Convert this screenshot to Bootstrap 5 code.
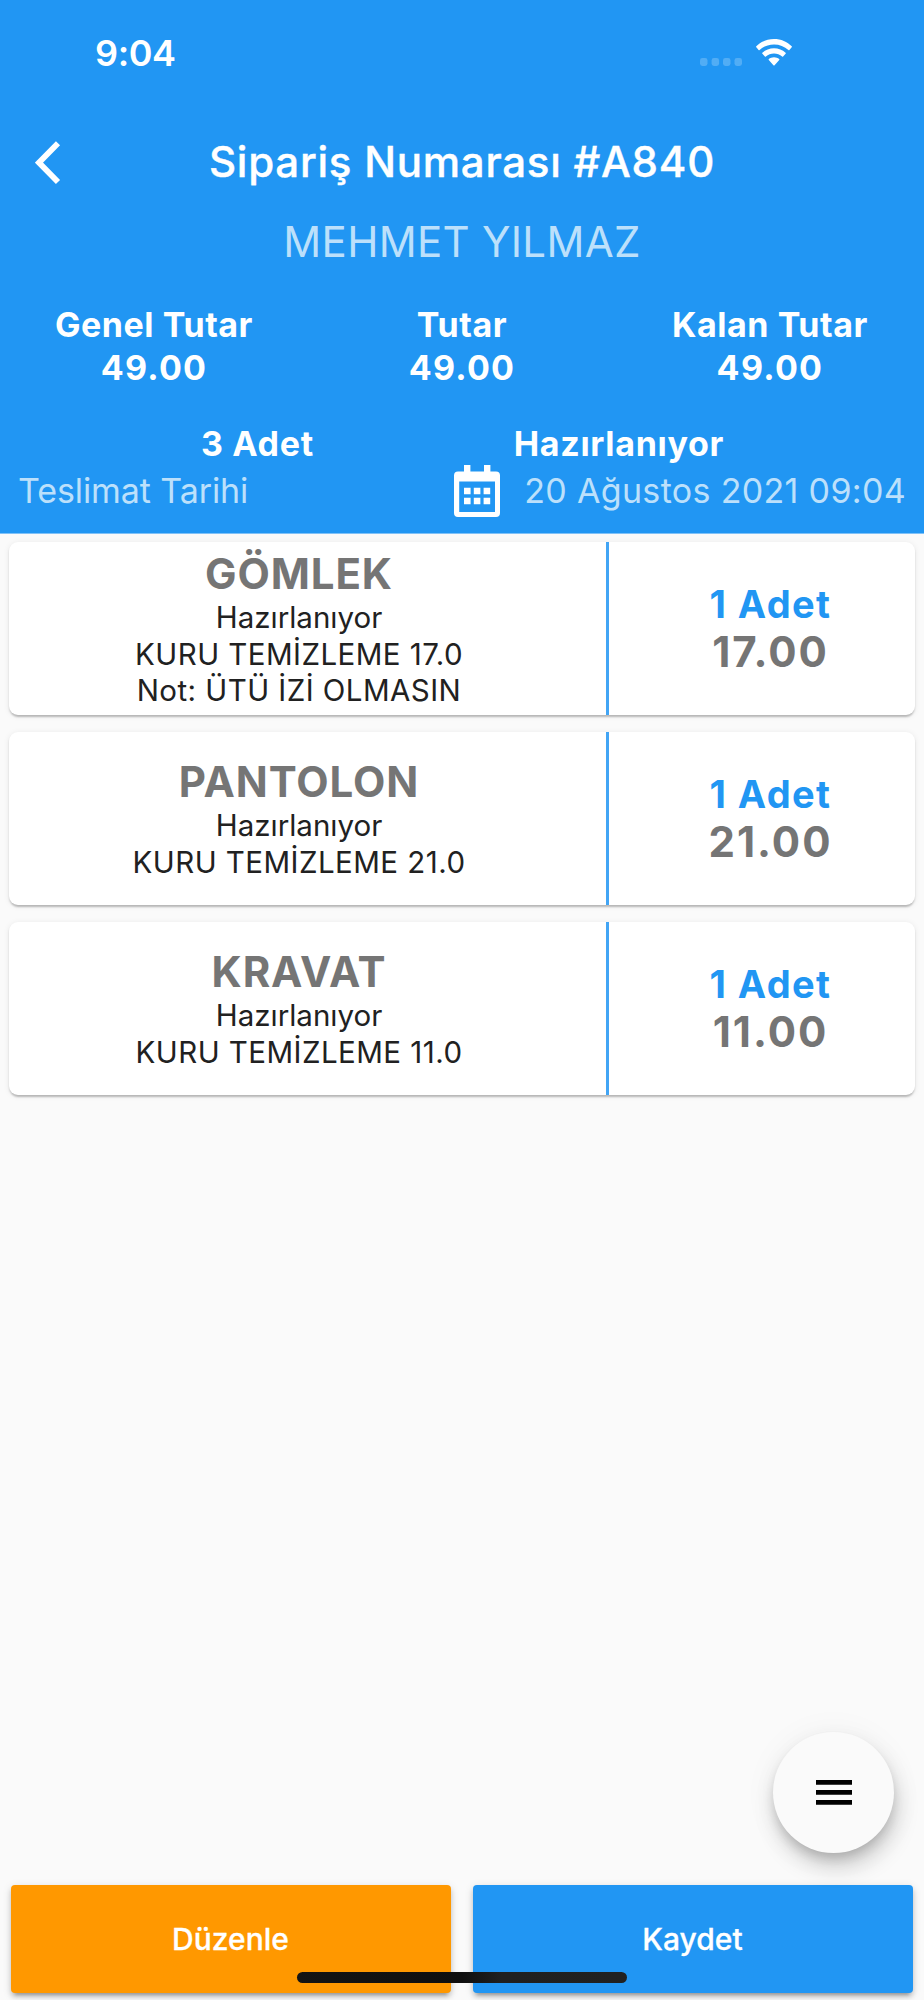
<!DOCTYPE html>
<html lang="tr">
<head>
<meta charset="utf-8">
<meta name="viewport" content="width=device-width, initial-scale=1">
<title>Sipariş Numarası #A840</title>
<link href="https://cdn.jsdelivr.net/npm/bootstrap@5.3.0/dist/css/bootstrap.min.css" rel="stylesheet">
<style>
  :root { --blue: #2196f3; --orange: #ff9800; --paper: #fafafa; }
  body { background: var(--paper); color: #212121; font-family: Inter, "Liberation Sans", sans-serif; }
  .screen { height: 2000px; overflow: hidden; }

  /* header */
  .app-header { background: var(--blue); height: 534px; border-bottom: 1px solid #80c2f8; }
  .status-bar { height: 112px; padding: 33px 132px 0 95px; }
  .clock { font-size: 36px; line-height: 40px; font-weight: 600; letter-spacing: -.4px; }
  .status-icons { padding-top: 6px; gap: 14px; }
  .app-title { height: 100px; padding-left: 35px; }
  .app-title svg { margin-top: 1px; }
  .app-title h1 { font-size: 42px; line-height: 50px; font-weight: 500; letter-spacing: .76px; -webkit-text-stroke: .4px #fff; }
  .customer { font-size: 42px; line-height: 50px; letter-spacing: .3px; margin-top: 5px; }
  .faded { color: #bce0fb; }
  .totals { margin-top: 36px; }
  .strong-line { font-size: 34px; line-height: 43px; font-weight: 700; letter-spacing: .55px; }
  .money { letter-spacing: 1.28px; }
  .summary { margin-top: 33px; padding-left: 1px; letter-spacing: .68px; }
  .delivery { font-size: 34px; line-height: 52px; height: 52px; padding: 0 18px; letter-spacing: -.09px; }
  .delivery .when { letter-spacing: .33px; }
  .delivery svg { margin-right: 24px; }

  /* order lines */
  .order-list { padding: 8px 9px; gap: 17px; }
  .order-card { height: 173px; border-radius: 9px; background: #fff;
    box-shadow: 0 4px 2px -2px rgba(0,0,0,.11), 0 2px 2px rgba(0,0,0,.14), 0 1px 6px rgba(0,0,0,.08); }
  .item-info { width: 580px; font-size: 29.5px; line-height: 36.7px; padding-top: 1px; }
  .item-name { font-size: 42px; line-height: 50px; font-weight: 700; color: #757575; letter-spacing: .9px; }
  .item-service { letter-spacing: .45px; }
  .item-rule { width: 37px; }
  .item-rule span { width: 3px; background: #42a5f5; }
  .item-qty { font-size: 38px; line-height: 45px; font-weight: 700; color: var(--blue); letter-spacing: 1.4px; padding-top: 1px; }
  .item-price { font-size: 42px; line-height: 50px; font-weight: 700; color: #757575; letter-spacing: 2px; }

  /* actions */
  .fab { right: 30px; top: 1732px; width: 121px; height: 121px; border: 0; background: var(--paper);
    box-shadow: 0 7px 11px -2px rgba(0,0,0,.16), 3px 14px 22px rgba(0,0,0,.17), 0 2px 34px rgba(0,0,0,.05); }
  .actions { padding: 0 11px 7px; gap: 22px; }
  .action-btn { height: 108px; border: 0; border-radius: 4px; color: #fff; font-size: 30px; font-weight: 500; line-height: 108px; padding: 0 1px 0 0;
    -webkit-text-stroke: .3px #fff;
    box-shadow: 0 6px 3px -4px rgba(0,0,0,.2), 0 4px 5px rgba(0,0,0,.16), 0 2px 10px rgba(0,0,0,.12); }
  .action-btn:hover { color: #fff; }
  .bg-orange { background: var(--orange) !important; }
  .bg-blue { background: var(--blue) !important; }
  .home-bar { left: 297px; bottom: 17px; width: 330px; height: 11px; border-radius: 6px;
    background: linear-gradient(90deg, #141414 0, #0f0f0f 50%, #202020 62%, #212121 100%); }
</style>
</head>
<body>
<div class="screen position-relative d-flex flex-column">

  <header class="app-header text-white">
    <div class="status-bar d-flex justify-content-between align-items-start">
      <span class="clock">9:04</span>
      <div class="status-icons d-flex">
        <svg width="42" height="27" viewBox="0 0 42 27" fill="#fff" fill-opacity=".22">
          <rect x="0" y="19" width="7.5" height="8" rx="2.4"/><rect x="11.6" y="19" width="7.5" height="8" rx="2.4"/>
          <rect x="23" y="19" width="7.5" height="8" rx="2.4"/><rect x="34.500" y="19" width="7.5" height="8" rx="2.4"/>
        </svg>
        <svg width="36" height="27" viewBox="0 0 36 27" fill="#fff">
          <path d="M18 0C11 0 4.700 2.600 .3 7.300Q-.2 7.800 .3 8.300L2.600 10.900Q3.100 11.400 3.600 10.900C7.500 7.400 12.500 5.400 18 5.400S28.500 7.400 32.400 10.900Q32.900 11.400 33.400 10.900L35.700 8.300Q36.200 7.800 35.700 7.300C31.300 2.600 25 0 18 0Z"/>
          <path d="M18 9.200C13.600 9.200 9.500 10.900 6.400 13.700Q5.900 14.200 6.400 14.700L8.900 17.500Q9.400 18 9.900 17.500C12.100 15.600 14.900 14.400 18 14.400S23.900 15.600 26.100 17.500Q26.600 18 27.100 17.500L29.600 14.700Q30.100 14.200 29.600 13.700C26.500 10.900 22.400 9.200 18 9.200Z"/>
          <path d="M18 18.200C16 18.200 14.200 18.900 12.800 20.100Q12.300 20.600 12.800 21.100L17.400 26.300Q18 26.900 18.600 26.300L23.200 21.100Q23.700 20.600 23.200 20.100C21.800 18.900 20 18.200 18 18.200Z"/>
        </svg>
      </div>
    </div>

    <div class="app-title d-flex align-items-center position-relative">
      <svg width="26" height="44" viewBox="0 0 26 44" fill="none" stroke="#fff" stroke-width="5.800"><path d="M23 2.200 3.900 21.600 23 41"/></svg>
      <h1 class="position-absolute start-0 w-100 text-center m-0">Sipariş Numarası #A840</h1>
    </div>

    <div class="customer faded text-center">MEHMET YILMAZ</div>

    <div class="totals row g-0 text-center strong-line">
      <div class="col-4"><div>Genel Tutar</div><div class="money">49.00</div></div>
      <div class="col-4"><div>Tutar</div><div class="money">49.00</div></div>
      <div class="col-4"><div>Kalan Tutar</div><div class="money">49.00</div></div>
    </div>

    <div class="strong-line summary d-flex justify-content-evenly">
      <span>3 Adet</span><span>Hazırlanıyor</span>
    </div>

    <div class="delivery faded d-flex align-items-center">
      <span class="me-auto">Teslimat Tarihi</span>
      <svg width="46" height="53" viewBox="0 0 46 53" fill="#fff">
        <path fill-rule="evenodd" d="M4 6.500H10V0H16.400V6.500H30V0H36.400V6.500H42A4 4 0 0 1 46 10.500V48A4 4 0 0 1 42 52H4A4 4 0 0 1 0 48V10.500A4 4 0 0 1 4 6.500ZM5.200 16.500V47H41V16.500Z"/>
        <path d="M10 22.700h6.600v6.600H10zM19.800 22.700h6.600v6.600h-6.600zM29.600 22.700h6.600v6.600h-6.600zM10 32.700h6.600v6.600H10zM19.800 32.700h6.600v6.600h-6.600zM29.600 32.700h6.600v6.600h-6.600z"/>
      </svg>
      <span class="when">20 Ağustos 2021 09:04</span>
    </div>
  </header>

  <main class="order-list d-flex flex-column text-center">
    <div class="order-card d-flex">
      <div class="item-info d-flex flex-column justify-content-center">
        <div class="item-name">GÖMLEK</div>
        <div>Hazırlanıyor</div>
        <div class="item-service">KURU TEMİZLEME 17.0</div>
        <div class="item-service">Not: ÜTÜ İZİ OLMASIN</div>
      </div>
      <div class="item-rule d-flex justify-content-center"><span></span></div>
      <div class="flex-fill d-flex flex-column justify-content-center">
        <div class="item-qty">1 Adet</div>
        <div class="item-price">17.00</div>
      </div>
    </div>
    <div class="order-card d-flex">
      <div class="item-info d-flex flex-column justify-content-center">
        <div class="item-name">PANTOLON</div>
        <div>Hazırlanıyor</div>
        <div class="item-service">KURU TEMİZLEME 21.0</div>
      </div>
      <div class="item-rule d-flex justify-content-center"><span></span></div>
      <div class="flex-fill d-flex flex-column justify-content-center">
        <div class="item-qty">1 Adet</div>
        <div class="item-price">21.00</div>
      </div>
    </div>
    <div class="order-card d-flex">
      <div class="item-info d-flex flex-column justify-content-center">
        <div class="item-name">KRAVAT</div>
        <div>Hazırlanıyor</div>
        <div class="item-service">KURU TEMİZLEME 11.0</div>
      </div>
      <div class="item-rule d-flex justify-content-center"><span></span></div>
      <div class="flex-fill d-flex flex-column justify-content-center">
        <div class="item-qty">1 Adet</div>
        <div class="item-price">11.00</div>
      </div>
    </div>
  </main>

  <button class="fab btn rounded-circle position-absolute d-flex align-items-center justify-content-center p-0" aria-label="Menü">
    <svg width="36" height="25" viewBox="0 0 36 25"><path d="M0 0h36v4.800H0zM0 10h36v4.800H0zM0 20h36v4.800H0z"/></svg>
  </button>

  <footer class="actions d-flex mt-auto">
    <button class="btn action-btn bg-orange flex-fill w-50">Düzenle</button>
    <button class="btn action-btn bg-blue flex-fill w-50">Kaydet</button>
  </footer>
  <div class="home-bar position-absolute"></div>
</div>
<script src="https://cdn.jsdelivr.net/npm/bootstrap@5.3.0/dist/js/bootstrap.bundle.min.js"></script>
</body>
</html>
